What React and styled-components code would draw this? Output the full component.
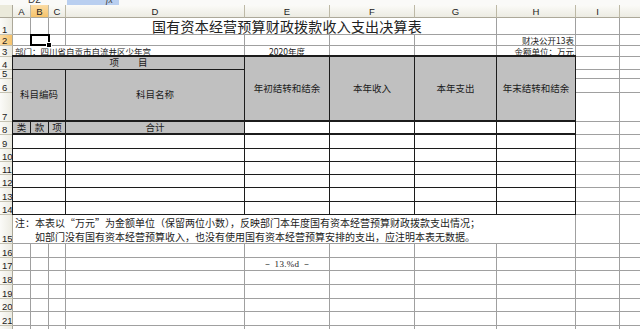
import React from "react";
import styled, { createGlobalStyle, css } from "styled-components";

const GlobalStyle = createGlobalStyle`
  html, body {
    margin: 0;
    padding: 0;
    background: #ffffff;
    overflow: hidden;
  }
  body {
    font-family: "Noto Sans CJK SC", "Liberation Sans", sans-serif;
    color: #111;
  }
`;

const GRID = "#a0a0a0";
const INK = "#1c1c1c";
const FILL = "#c0c0c0";

const Window = styled.div`
  width: 640px;
  height: 329px;
  overflow: hidden;
  background: #fff;
`;

const FormulaStrip = styled.div`
  height: 5px;
  display: flex;
  overflow: hidden;
  background: #fafaf8;
`;

const NameBox = styled.div`
  width: 64px;
  height: 10px;
  margin-top: -5px;
  padding-left: 28px;
  box-sizing: border-box;
  font: 10px/10px "Liberation Sans", sans-serif;
  color: #333;
`;

const FxBox = styled.div`
  width: 52px;
  height: 5px;
  margin-left: 3px;
  background: #b9cff0;
  display: flex;
  justify-content: flex-end;
  overflow: hidden;
  span {
    font: italic 10px/10px "Liberation Serif", serif;
    margin-top: -5px;
    padding-right: 6px;
    color: #444;
  }
`;

/* gridlines are painted by the sheet background showing through 1px gaps */
const Sheet = styled.div`
  display: grid;
  grid-template-columns: 13px 17px 1px 17px 1px 16px 1px 178px 1px 84px 1px 84px 1px 81px 1px 78px 1px 43px 1px 63px 1px;
  grid-template-rows:
    13px 16px 1px 10px 1px 10px 1px 12px 1px 8px 1px 13px 1px 28px 1px 12px 1px
    13px 1px 12px 1px 12px 1px 12px 1px 13px 1px 12px 1px
    28px 1px 13px 1px 12px 1px 13px 1px 13px 1px 12px 1px 13px 1px 13px 1px;
  width: 704px;
  background: ${GRID};
`;

// column c (1=A) and row r (1-based sheet row) map onto cell tracks of the grid
const colLine = (c) => 2 * c;
const rowLine = (r) => 2 * r;

const place = css`
  grid-column: ${(p) => colLine(p.$col)} / span ${(p) => 2 * (p.$cs || 1) - (p.$edge ? 0 : 1)};
  grid-row: ${(p) => rowLine(p.$row)} / span ${(p) => 2 * (p.$rs || 1) - (p.$edge ? 0 : 1)};
`;

const Corner = styled.div`
  grid-column: 1;
  grid-row: 1;
  background: #ebeadb;
  border-right: 1px solid #aca899;
  border-bottom: 1px solid #aca899;
  box-sizing: border-box;
`;

const ColHead = styled.div`
  grid-column: ${(p) => colLine(p.$col)} / span 2;
  grid-row: 1;
  box-sizing: border-box;
  display: flex;
  align-items: center;
  justify-content: center;
  font: 9.5px "Liberation Sans", sans-serif;
  color: #222;
  border-right: 1px solid #bdb9a6;
  border-bottom: 1px solid #aca899;
  background: ${(p) =>
    p.$active
      ? "linear-gradient(#fbdca4, #f6c36b)"
      : "linear-gradient(#fbfbf8, #ecebe2)"};
  overflow: hidden;
`;

const RowHead = styled.div`
  grid-column: 1;
  grid-row: ${(p) => rowLine(p.$row)} / span 2;
  box-sizing: border-box;
  display: flex;
  align-items: flex-end;
  justify-content: flex-start;
  padding: 0 0 0 2px;
  font: 9.5px/9px "Liberation Sans", sans-serif;
  color: #222;
  border-right: 1px solid #aca899;
  border-bottom: 1px solid #c5c2b2;
  background: ${(p) =>
    p.$active
      ? "linear-gradient(90deg, #fbdca4, #f6c36b)"
      : "linear-gradient(90deg, #fbfbf8, #ecebe2)"};
  overflow: hidden;
`;

const GridCell = styled.div`
  ${place}
  background: #fff;
  display: flex;
  align-items: center;
  justify-content: center;
`;

const TextCell = styled.div`
  ${place}
  background: #fff;
  display: flex;
  align-items: center;
  justify-content: ${(p) => p.$justify || "flex-start"};
  padding: ${(p) => p.$pad || "0 2px"};
  font-size: ${(p) => p.$size || "8.5px"};
  line-height: 1;
  color: ${INK};
  white-space: nowrap;
`;

const Title = styled(TextCell)`
  font-size: 14px;
  letter-spacing: 0.2px;
  color: #222;
`;

const TableCell = styled.div`
  ${place}
  box-sizing: border-box;
  margin: ${(p) => (p.$top ? -p.$top : 0)}px 0 0 ${(p) => (p.$left ? -1 : 0)}px;
  background: ${(p) => (p.$fill ? FILL : "#fff")};
  border-right: 1px solid ${INK};
  border-bottom: ${(p) => p.$bottom || 1}px solid ${INK};
  border-top: ${(p) => (p.$top ? `${p.$top}px solid ${INK}` : "none")};
  border-left: ${(p) => (p.$left ? `1px solid ${INK}` : "none")};
  display: flex;
  align-items: center;
  justify-content: center;
  font-size: 9.5px;
  line-height: 1;
  color: ${INK};
  white-space: nowrap;
`;

const Note = styled.div`
  ${place}
  background: #fff;
  padding: 1px 0 0 2px;
  font-size: 10px;
  line-height: 14px;
  color: ${INK};
  white-space: pre;
`;

const PageNo = styled.span`
  font: 9px "Liberation Serif", serif;
  color: #222;
  letter-spacing: 0.3px;
`;

const Selection = styled.div`
  ${place}
  box-sizing: border-box;
  border: 2px solid #000;
  position: relative;
  margin: -1px -1px 0 -1px;
  &::after {
    content: "";
    position: absolute;
    right: -4px;
    bottom: -4px;
    width: 4px;
    height: 4px;
    background: #000;
    border: 1px solid #fff;
  }
`;

const columns = ["A", "B", "C", "D", "E", "F", "G", "H", "I", "J"];
const rowCount = 23;

const App = () => {
  const blanks = [];
  for (let r = 1; r <= rowCount; r++) {
    for (let c = 1; c <= columns.length; c++) {
      blanks.push(<GridCell key={`g${r}-${c}`} $row={r} $col={c} />);
    }
  }

  // data rows 9..14 of the report table
  const body = [];
  for (let r = 9; r <= 14; r++) {
    body.push(
      <TableCell key={`abc${r}`} $row={r} $col={1} $cs={3} $edge $left />,
      <TableCell key={`d${r}`} $row={r} $col={4} $edge />,
      <TableCell key={`e${r}`} $row={r} $col={5} $edge />,
      <TableCell key={`f${r}`} $row={r} $col={6} $edge />,
      <TableCell key={`g${r}`} $row={r} $col={7} $edge />,
      <TableCell key={`h${r}`} $row={r} $col={8} $edge />
    );
  }

  return (
    <>
      <GlobalStyle />
      <Window>
        <FormulaStrip>
          <NameBox>D2</NameBox>
          <FxBox>
            <span>fx</span>
          </FxBox>
        </FormulaStrip>
        <Sheet>
          <Corner />
          {columns.map((c, i) => (
            <ColHead key={c} $col={i + 1} $active={c === "B"}>
              {c}
            </ColHead>
          ))}
          {Array.from({ length: rowCount }, (_, i) => (
            <RowHead key={i} $row={i + 1} $active={i + 1 === 2}>
              {i + 1}
            </RowHead>
          ))}

          {blanks}

          <Title $row={1} $col={4} $cs={4} $justify="center" $pad="0 0 0 12px">
            国有资本经营预算财政拨款收入支出决算表
          </Title>

          <TextCell $row={2} $col={8} $justify="flex-end" $pad="0 1px 0 0">
            财决公开13表
          </TextCell>

          <TextCell $row={3} $col={1} $cs={4} $pad="0 0 0 2px">
            部门：四川省自贡市自流井区少年宫
          </TextCell>
          <TextCell $row={3} $col={5} $justify="center">
            2020年度
          </TextCell>
          <TextCell $row={3} $col={8} $justify="flex-end" $pad="0 1px 0 0">
            金额单位：万元
          </TextCell>

          <TableCell $row={4} $col={1} $cs={4} $edge $fill $left $top={2}>
            项　　目
          </TableCell>
          <TableCell $row={4} $col={5} $rs={4} $edge $fill $top={2} $bottom={2}>
            年初结转和结余
          </TableCell>
          <TableCell $row={4} $col={6} $rs={4} $edge $fill $top={2} $bottom={2}>
            本年收入
          </TableCell>
          <TableCell $row={4} $col={7} $rs={4} $edge $fill $top={2} $bottom={2}>
            本年支出
          </TableCell>
          <TableCell $row={4} $col={8} $rs={4} $edge $fill $top={2} $bottom={2}>
            年末结转和结余
          </TableCell>

          <TableCell $row={5} $col={1} $cs={3} $rs={3} $edge $fill $left $bottom={2}>
            科目编码
          </TableCell>
          <TableCell $row={5} $col={4} $rs={3} $edge $fill $bottom={2}>
            科目名称
          </TableCell>

          <TableCell $row={8} $col={1} $edge $fill $left $bottom={2}>
            类
          </TableCell>
          <TableCell $row={8} $col={2} $edge $fill $bottom={2}>
            款
          </TableCell>
          <TableCell $row={8} $col={3} $edge $fill $bottom={2}>
            项
          </TableCell>
          <TableCell $row={8} $col={4} $edge $fill $bottom={2}>
            合计
          </TableCell>
          <TableCell $row={8} $col={5} $edge $bottom={2} />
          <TableCell $row={8} $col={6} $edge $bottom={2} />
          <TableCell $row={8} $col={7} $edge $bottom={2} />
          <TableCell $row={8} $col={8} $edge $bottom={2} />

          {body}

          <Note $row={15} $col={1} $cs={8}>
            {"注：本表以“万元”为金额单位（保留两位小数），反映部门本年度国有资本经营预算财政拨款支出情况；\n　　如部门没有国有资本经营预算收入，也没有使用国有资本经营预算安排的支出，应注明本表无数据。"}
          </Note>

          <GridCell $row={17} $col={5}>
            <PageNo>－ 13.%d －</PageNo>
          </GridCell>

          <Selection $row={2} $col={2} $edge />
        </Sheet>
      </Window>
    </>
  );
};

export default App;
